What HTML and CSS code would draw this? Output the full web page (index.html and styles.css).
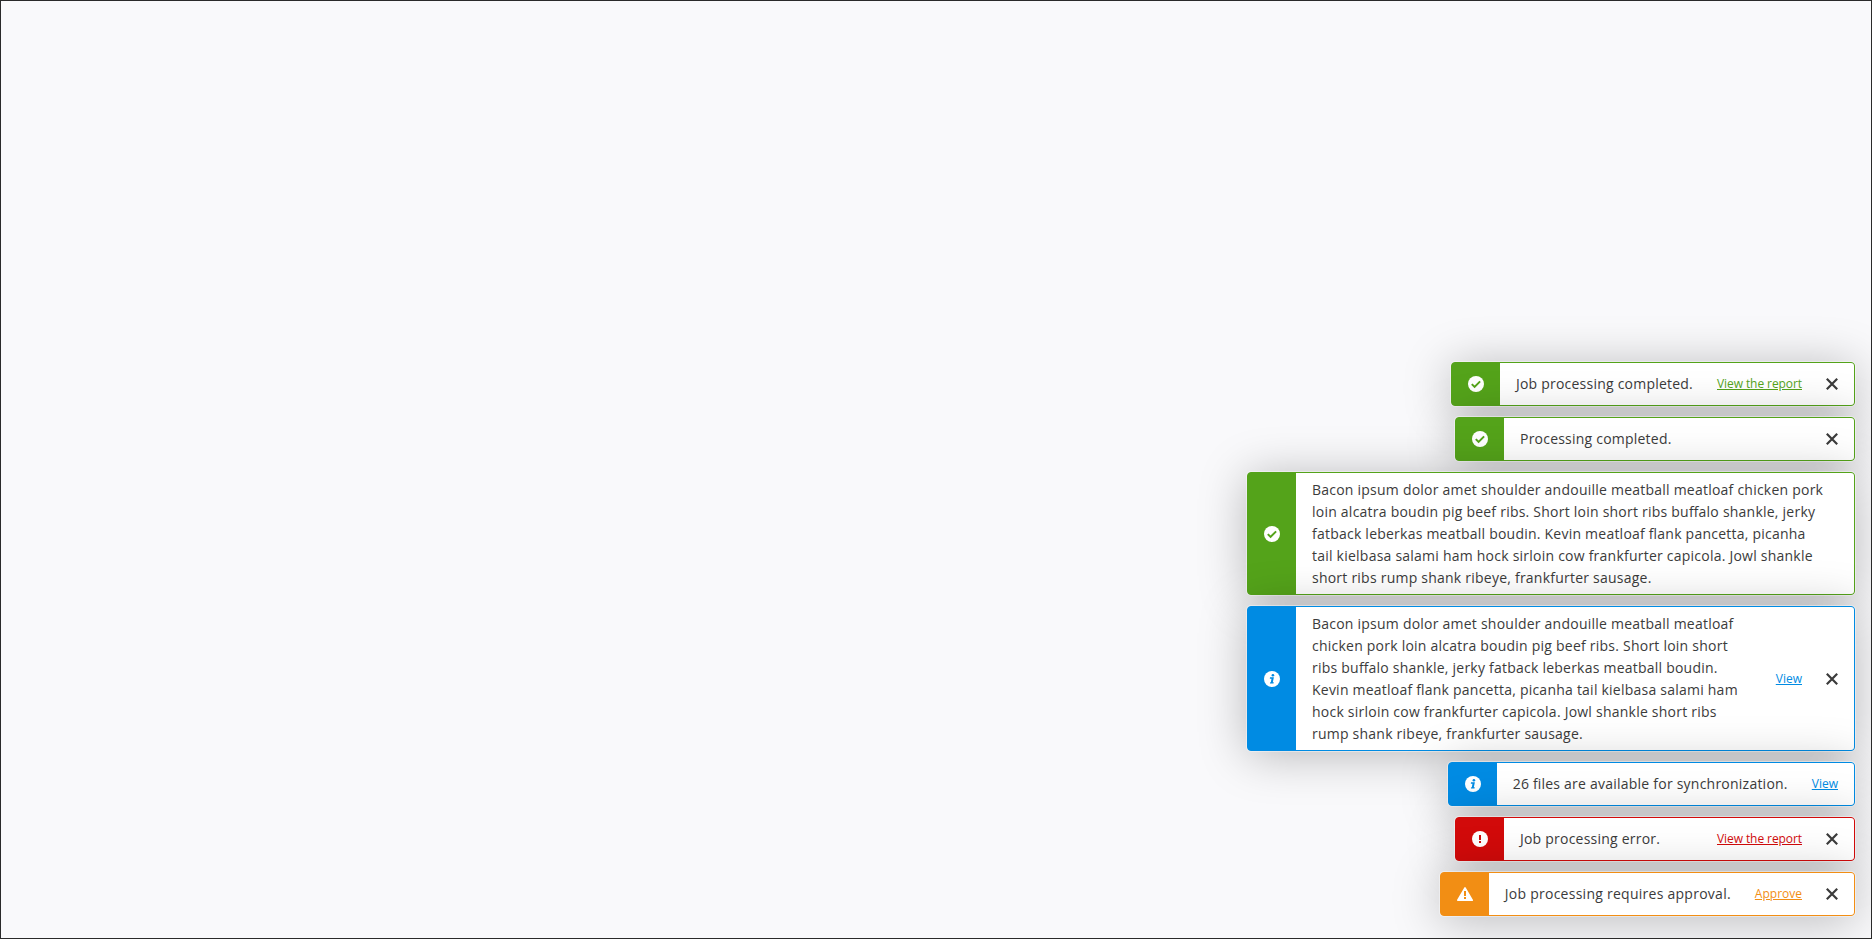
FILE: index.html
```
<!DOCTYPE html>
<html lang="en">
<head>
<meta charset="utf-8">
<title>Notifications</title>
<link rel="stylesheet" href="styles.css">
</head>
<body>
<svg class="defs" width="0" height="0">
  <symbol id="check" viewBox="0 0 16 16"><circle cx="8" cy="8" r="8" fill="#fff"/><path d="M3.8 8.100l2.800 2.800 5.500-5.500" fill="none" stroke="currentColor" stroke-width="2"/></symbol>
  <symbol id="info" viewBox="0 0 16 16"><circle cx="8" cy="8" r="8" fill="#fff"/><circle cx="8.900" cy="4.200" r="1.300" fill="currentColor"/><path d="M6 6.300h3.900l-1.100 4.900h1l-.3 1.400H5.900l.3-1.400h.6l.7-3.500H5.800z" fill="currentColor"/></symbol>
  <symbol id="error" viewBox="0 0 16 16"><circle cx="8" cy="8" r="8" fill="#fff"/><path d="M7 4h2v5H7zM7 10h2v2H7z" fill="currentColor"/></symbol>
  <symbol id="warning" viewBox="0 0 16 16"><path d="M8 1.900L15.200 14.200H.8z" fill="#fff" stroke="#fff" stroke-width="1.600" stroke-linejoin="round"/><path d="M7 5h2v5H7zM7 11h2v2H7z" fill="currentColor"/></symbol>
  <symbol id="close" viewBox="0 0 12 12"><path d="M.8.8l10.400 10.400M11.200.8L.8 11.200" fill="none" stroke="currentColor" stroke-width="2.200"/></symbol>
</svg>
<main class="stack">
  <section class="toast success">
    <div class="mark"><svg><use href="#check"/></svg></div>
    <div class="body"><p class="text">Job processing completed.</p><a class="link long">View the report</a><svg class="close"><use href="#close"/></svg></div>
  </section>
  <section class="toast success">
    <div class="mark"><svg><use href="#check"/></svg></div>
    <div class="body"><p class="text">Processing completed.</p><svg class="close"><use href="#close"/></svg></div>
  </section>
  <section class="toast success">
    <div class="mark"><svg><use href="#check"/></svg></div>
    <div class="body"><p class="text wide">Bacon ipsum dolor amet shoulder andouille meatball meatloaf chicken pork loin alcatra boudin pig beef ribs. Short loin short ribs buffalo shankle, jerky fatback leberkas meatball boudin. Kevin meatloaf flank pancetta, picanha tail kielbasa salami ham hock sirloin cow frankfurter capicola. Jowl shankle short ribs rump shank ribeye, frankfurter sausage.</p></div>
  </section>
  <section class="toast info">
    <div class="mark"><svg><use href="#info"/></svg></div>
    <div class="body"><p class="text">Bacon ipsum dolor amet shoulder andouille meatball meatloaf chicken pork loin alcatra boudin pig beef ribs. Short loin short ribs buffalo shankle, jerky fatback leberkas meatball boudin. Kevin meatloaf flank pancetta, picanha tail kielbasa salami ham hock sirloin cow frankfurter capicola. Jowl shankle short ribs rump shank ribeye, frankfurter sausage.</p><a class="link">View</a><svg class="close"><use href="#close"/></svg></div>
  </section>
  <section class="toast info">
    <div class="mark"><svg><use href="#info"/></svg></div>
    <div class="body"><p class="text">26 files are available for synchronization.</p><a class="link">View</a></div>
  </section>
  <section class="toast error">
    <div class="mark"><svg><use href="#error"/></svg></div>
    <div class="body"><p class="text">Job processing error.</p><a class="link long">View the report</a><svg class="close"><use href="#close"/></svg></div>
  </section>
  <section class="toast warning">
    <div class="mark"><svg><use href="#warning"/></svg></div>
    <div class="body"><p class="text loose">Job processing requires approval.</p><a class="link">Approve</a><svg class="close"><use href="#close"/></svg></div>
  </section>
</main>
</body>
</html>
```
FILE: styles.css
```
* { box-sizing: border-box; }
body {
  margin: 0;
  height: 100vh;
  overflow: hidden;
  border: 1px solid #2a2a2a;
  background: #f9f9fb;
  font-family: "Open Sans", sans-serif;
  color: #3b3b3b;
}
.defs { position: absolute; }
.stack {
  height: 100%;
  display: flex;
  flex-direction: column;
  justify-content: flex-end;
  align-items: flex-end;
  gap: 11px;
  padding: 0 16px 22px 0;
}
.toast {
  display: flex;
  min-width: 400px;
  max-width: 608px;
  min-height: 44px;
  border: 1px solid var(--tone);
  border-radius: 4px;
  background: var(--tone);
  box-shadow: 0 0 0 1px rgba(255, 255, 255, .4), 0 4px 48px rgba(0, 0, 0, .27);
}
.success { --tone: #54a31a; }
.info { --tone: #008be3; }
.error { --tone: #d20a0a; }
.warning { --tone: #f28e14; }
.mark {
  flex: none;
  width: 48px;
  display: flex;
  align-items: center;
  justify-content: center;
  color: var(--tone);
}
.mark svg { width: 16px; height: 16px; }
.body {
  flex: 1;
  display: flex;
  align-items: center;
  gap: 24px;
  padding: 5.5px 16px;
  background: #fff;
  border-radius: 0 3px 3px 0;
}
.text {
  flex: 1;
  margin: 0;
  font-size: 14px;
  line-height: 22px;
  letter-spacing: .22px;
  font-feature-settings: "liga" 1;
}
.wide { padding-right: 12px; }
.info .text, .wide { letter-spacing: .23px; }
.loose { letter-spacing: .26px; }
.link {
  flex: none;
  font-size: 12px;
  line-height: 22px;
  color: var(--tone);
  text-decoration: underline;
}
.long { letter-spacing: -.08px; }
.close { flex: none; width: 12px; height: 12px; }
```
